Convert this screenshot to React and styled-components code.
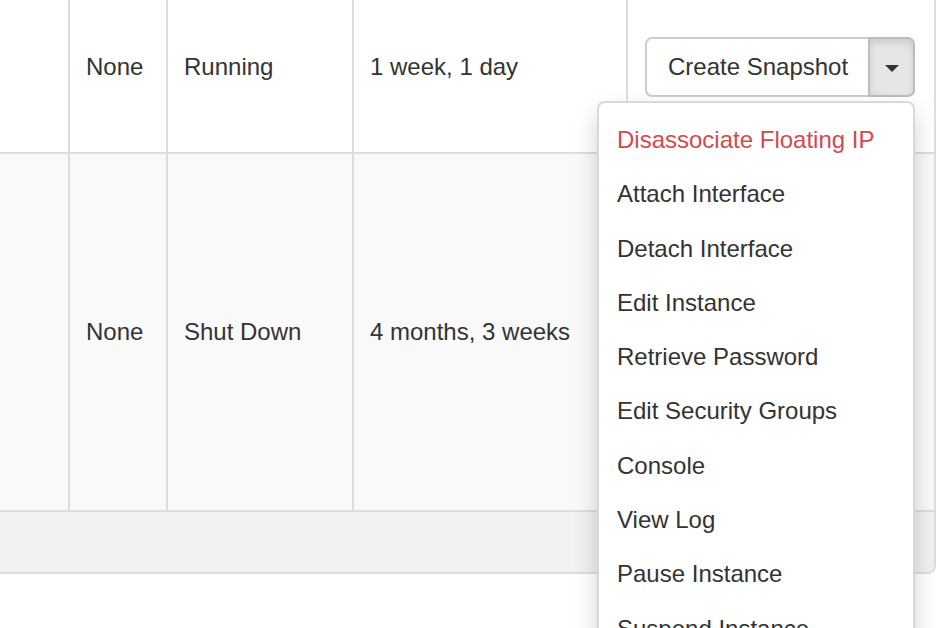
import React from "react";
import styled, { createGlobalStyle } from "styled-components";

const Global = createGlobalStyle`
  html, body { margin: 0; padding: 0; background: #fff; overflow: hidden; }
  body {
    width: 936px; height: 628px;
    font-family: "Liberation Sans", Arial, Helvetica, sans-serif;
    color: #333;
  }
  * { box-sizing: border-box; }
`;

const Frame = styled.div`
  width: 936px;
  margin-top: -18px;
  border-right: 2px solid #dddddd;
  border-bottom: 2px solid #dddddd;
  border-bottom-right-radius: 8px;
`;

const Row = styled.div`
  display: grid;
  grid-template-columns: 70px 98px 186px 274px 1fr;
  height: ${(p) => p.$h}px;
  background: ${(p) => (p.$striped ? "#f9f9f9" : "#ffffff")};
  border-bottom: 2px solid #dddddd;
`;

const Cell = styled.div`
  display: flex;
  align-items: center;
  padding: 0 16px;
  font-size: 24px;
  line-height: 1.42857;
  white-space: nowrap;
  border-right: ${(p) => (p.$last ? "none" : "2px solid #dddddd")};
  position: relative;
`;

const ActionCell = styled(Cell)`
  padding-left: 17px;
  overflow: visible;
`;

const Footer = styled.div`
  height: 60px;
  background: #f1f1f1;
  border-bottom-right-radius: 6px;
`;

const BtnGroup = styled.div`
  position: relative;
  display: inline-flex;
  height: 60px;
`;

const MainBtn = styled.button`
  font-family: inherit;
  font-size: 24px;
  line-height: 1.42857;
  color: #333;
  background: #fff;
  border: 2px solid #cccccc;
  border-right: none;
  border-radius: 7px 0 0 7px;
  padding: 0 20px 0 21px;
  height: 60px;
  width: 223px;
  text-align: left;
`;

const CaretBtn = styled.button`
  width: 47px;
  height: 60px;
  background: #e6e6e6;
  border: 2px solid #bdbdbd;
  border-radius: 0 7px 7px 0;
  box-shadow: inset 0 4px 7px rgba(0, 0, 0, 0.12);
  display: flex;
  align-items: center;
  justify-content: center;
  padding: 0;
`;

const Caret = styled.span`
  width: 0;
  height: 0;
  border-top: 7px solid #333;
  border-left: 7px solid transparent;
  border-right: 7px solid transparent;
  margin-top: 2px;
`;

const Menu = styled.ul`
  position: absolute;
  top: 64px;
  right: 0;
  width: 318px;
  margin: 0;
  padding: 10px 0;
  list-style: none;
  background: #fff;
  border: 2px solid rgba(0, 0, 0, 0.15);
  border-radius: 8px;
  box-shadow: 0 12px 24px rgba(0, 0, 0, 0.175);
  z-index: 10;
`;

const Item = styled.li`
  padding: 10px 18px;
  font-size: 24px;
  line-height: 1.42857;
  white-space: nowrap;
  color: ${(p) => (p.$danger ? "#d24a4f" : "#333")};
`;

const items = [
  "Attach Interface",
  "Detach Interface",
  "Edit Instance",
  "Retrieve Password",
  "Edit Security Groups",
  "Console",
  "View Log",
  "Pause Instance",
  "Suspend Instance",
  "Resume Instance",
];

export default function App() {
  return (
    <>
      <Global />
      <Frame>
        <Row $h={172}>
          <Cell />
          <Cell>None</Cell>
          <Cell>Running</Cell>
          <Cell>1 week, 1 day</Cell>
          <ActionCell $last>
            <BtnGroup>
              <MainBtn>Create Snapshot</MainBtn>
              <CaretBtn>
                <Caret />
              </CaretBtn>
              <Menu>
                <Item $danger>Disassociate Floating IP</Item>
                {items.map((t) => (
                  <Item key={t}>{t}</Item>
                ))}
              </Menu>
            </BtnGroup>
          </ActionCell>
        </Row>
        <Row $h={358} $striped>
          <Cell />
          <Cell>None</Cell>
          <Cell>Shut Down</Cell>
          <Cell>4 months, 3 weeks</Cell>
          <Cell $last />
        </Row>
        <Footer />
      </Frame>
    </>
  );
}
